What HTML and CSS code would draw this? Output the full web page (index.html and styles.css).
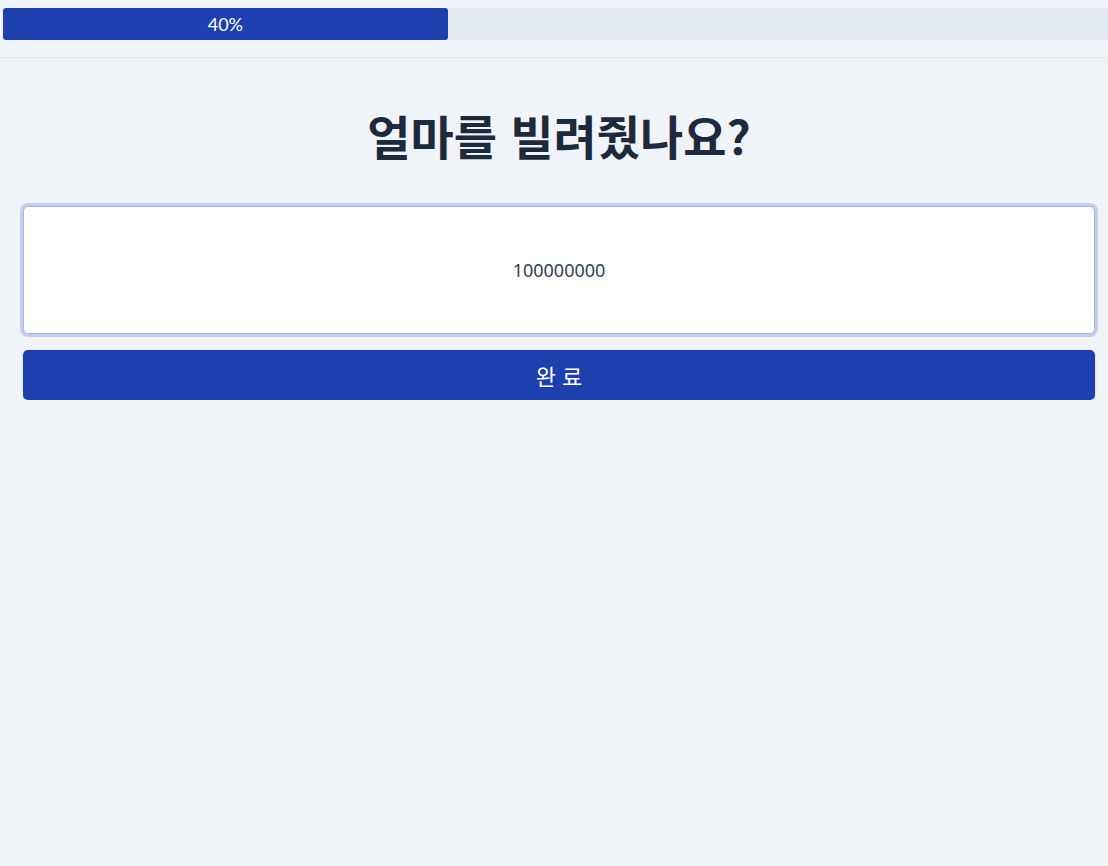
FILE: index.html
```html
<!DOCTYPE html>
<html lang="ko">
<head>
<meta charset="utf-8">
<link rel="stylesheet" href="styles.css">
</head>
<body>
<header class="top">
  <div class="track">
    <div class="fill" style="width: 40%">40%</div>
  </div>
</header>
<main class="content">
  <h1 class="title">얼마를 빌려줬나요?</h1>
  <div class="field">
    <input class="amount" type="text" value="100000000">
  </div>
  <button class="done">완 료</button>
</main>
</body>
</html>
```
FILE: styles.css
```css
html, body {
  margin: 0;
  padding: 0;
  background: #f0f4f9;
  overflow: hidden;
  font-family: "Noto Sans", "Noto Sans CJK KR", sans-serif;
}
.top {
  padding: 8px 0 17px 3px;
  border-bottom: 1px solid #e2e8f0;
}
.track {
  width: 1112px;
  height: 32px;
  background: #e1e8f0;
  border-radius: 3px;
}
.fill {
  height: 32px;
  background: #1e40af;
  border-radius: 3px;
  color: #ffffff;
  font-family: Lato, "Noto Sans", sans-serif;
  font-size: 18px;
  line-height: 32px;
  text-align: center;
}
.content {
  padding: 0 13px 0 23px;
  display: flex;
  flex-direction: column;
}
.title {
  margin: 44px 0 38px;
  text-align: center;
  font-family: "Noto Sans CJK KR", sans-serif;
  font-size: 47px;
  font-weight: 700;
  line-height: 66px;
  color: #1e293b;
}
.field {
  display: flex;
}
.amount {
  flex: 1;
  height: 128px;
  box-sizing: border-box;
  margin: 0;
  border: 1px solid #a7b5dc;
  border-radius: 5px;
  box-shadow: 0 0 0 3px #c4cfe9;
  background: #ffffff;
  text-align: center;
  font-family: "Noto Sans", sans-serif;
  font-weight: 400;
  font-size: 18px;
  color: #334155;
  outline: none;
}
.done {
  margin-top: 16px;
  height: 50px;
  border: none;
  border-radius: 5px;
  background: #1e40af;
  color: #ffffff;
  font-family: "Noto Sans CJK KR", sans-serif;
  font-size: 22px;
  box-shadow: 0 1px 3px rgba(30, 41, 59, 0.15);
}
```
